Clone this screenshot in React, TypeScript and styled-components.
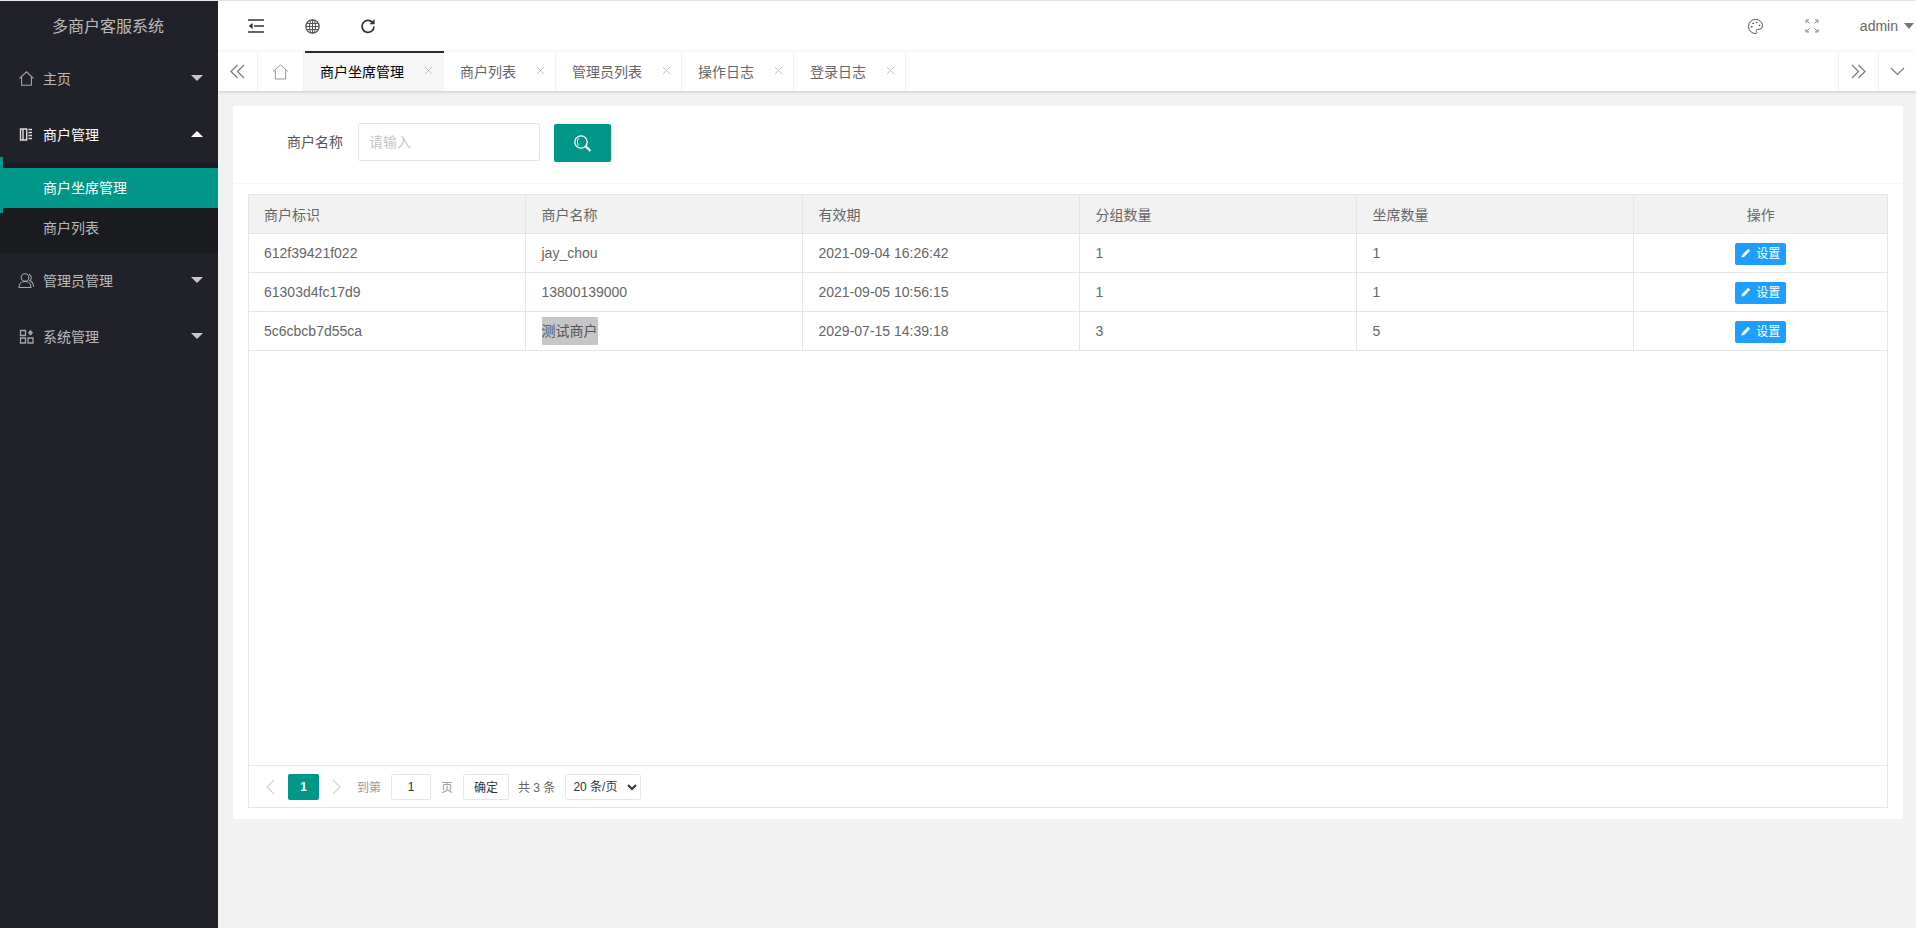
import React from "react"
import styled, { createGlobalStyle } from "styled-components"
import { Palette } from "lucide-react"

const GlobalStyle = createGlobalStyle`
  html,
  body {
    margin: 0;
    height: 100%;
    overflow: hidden;
    font-family: "Liberation Sans", "Noto Sans CJK SC", sans-serif;
    font-size: 14px;
    color: #666;
  }
  #root {
    height: 100%;
  }
  * {
    box-sizing: border-box;
  }
`

const Shell = styled.div`
  display: flex;
  height: 100%;
  border-top: 1px solid #e6e6e6;
  background: #f2f2f2;
`

const Sidebar = styled.aside`
  position: relative;
  flex: 0 0 218px;
  background: #212229;
`

const Logo = styled.div`
  height: 50px;
  padding: 0 2px 2px 0;
  display: flex;
  align-items: center;
  justify-content: center;
  font-size: 16px;
  color: rgba(255, 255, 255, 0.7);
`

const NavItem = styled.div<{ $open?: boolean }>`
  height: 56px;
  padding: 0 15px 2px 18px;
  display: flex;
  align-items: center;
  gap: 8px;
  color: ${(p) => (p.$open ? "#fff" : "rgba(255, 255, 255, 0.7)")};

  span {
    flex: 1;
  }
`

const NavIcon = styled.svg`
  flex: 0 0 17px;
  width: 17px;
  height: 17px;
  fill: none;
  stroke: currentColor;
  stroke-width: 1.1;
  opacity: 0.85;
`

const Caret = styled.i<{ $up?: boolean }>`
  width: 0;
  height: 0;
  border-left: 6px solid transparent;
  border-right: 6px solid transparent;
  border-top: ${(p) => (p.$up ? "0" : "6px solid rgba(255, 255, 255, 0.75)")};
  border-bottom: ${(p) => (p.$up ? "6px solid #fff" : "0")};
`

const SubNav = styled.div`
  padding: 5px 0;
  background: #191b1f;
`

const SubItem = styled.div<{ $active?: boolean }>`
  height: 40px;
  padding: 0 0 2px 43px;
  display: flex;
  align-items: center;
  color: ${(p) => (p.$active ? "#fff" : "rgba(255, 255, 255, 0.7)")};
  background: ${(p) => (p.$active ? "#009688" : "transparent")};
`

const NavBar = styled.i`
  position: absolute;
  left: 0;
  top: 156px;
  width: 3px;
  height: 56px;
  background: #009688;
`

const Main = styled.main`
  flex: 1;
  min-width: 0;
  display: flex;
  flex-direction: column;
`

const Header = styled.header`
  height: 50px;
  display: flex;
  align-items: center;
  background: #fff;
`

const ToolButton = styled.div`
  width: 56px;
  height: 50px;
  display: flex;
  align-items: center;
  justify-content: center;
  color: #333;
`

const HeaderLeft = styled.div`
  display: flex;
  margin-left: 10px;
`

const HeaderRight = styled.div`
  display: flex;
  align-items: center;
  margin-left: auto;
`

const UserMenu = styled.div`
  display: flex;
  align-items: center;
  gap: 6px;
  margin: 0 2px 0 20px;
  color: #666;
`

const UserCaret = styled.i`
  width: 0;
  height: 0;
  border-left: 5px solid transparent;
  border-right: 5px solid transparent;
  border-top: 6px solid #777;
`

const TabBar = styled.nav`
  height: 40px;
  display: flex;
  background: #fff;
  border-top: 1px solid #f6f6f6;
  box-shadow: 0 1px 3px rgba(0, 0, 0, 0.18);
  z-index: 1;
`

const TabControl = styled.div<{ $width: number; $right?: boolean }>`
  flex: 0 0 ${(p) => p.$width}px;
  display: flex;
  align-items: center;
  justify-content: center;
  color: #777;
  border-right: ${(p) => (p.$right ? "0" : "1px solid #f2f2f2")};
  border-left: ${(p) => (p.$right ? "1px solid #f2f2f2" : "0")};
`

const Tab = styled.div<{ $active?: boolean }>`
  position: relative;
  display: flex;
  align-items: center;
  padding: 0 ${(p) => (p.$active ? 11 : 10)}px 2px 16px;
  gap: 20px;
  color: ${(p) => (p.$active ? "#000" : "#666")};
  background: ${(p) => (p.$active ? "#f6f6f6" : "#fff")};
  border-right: ${(p) => (p.$active ? "0" : "1px solid #f2f2f2")};

  &::before {
    content: "";
    display: ${(p) => (p.$active ? "block" : "none")};
    position: absolute;
    left: 1px;
    right: 0;
    top: -1px;
    height: 2px;
    background: #292b34;
  }
`

const TabSpacer = styled.div`
  flex: 1;
`

const TabClose = styled.svg`
  width: 9px;
  height: 9px;
  stroke: #c2c2c2;
  stroke-width: 1;
`

const Content = styled.section`
  flex: 1;
  padding: 15px 13px 0 15px;
`

const Card = styled.div`
  height: 713px;
  background: #fff;
  border-radius: 2px;
  display: flex;
  flex-direction: column;
`

const SearchRow = styled.div`
  height: 78px;
  padding: 17px 0 0 54px;
  display: flex;
  align-items: flex-start;
  border-bottom: 1px solid #f6f6f6;
`

const SearchLabel = styled.label`
  height: 38px;
  margin-right: 15px;
  padding-bottom: 2px;
  display: flex;
  align-items: center;
  color: #555;
`

const SearchInput = styled.input`
  width: 182px;
  height: 38px;
  padding: 0 10px;
  border: 1px solid #e6e6e6;
  border-radius: 2px;
  font: inherit;
  outline: none;

  &::placeholder {
    color: #c4c4c4;
  }
`

const SearchButton = styled.button`
  width: 57px;
  height: 38px;
  margin: 1px 0 0 14px;
  padding: 0;
  border: 0;
  border-radius: 2px;
  background: #009688;
  color: #fff;
  display: flex;
  align-items: center;
  justify-content: center;
`

const TableBox = styled.div`
  flex: 1;
  margin: 10px 15px 11px;
  border: 1px solid #e6e6e6;
  display: flex;
  flex-direction: column;
`

const TableArea = styled.div`
  flex: 1;
`

const Table = styled.table`
  width: 100%;
  table-layout: fixed;
  border-collapse: collapse;

  th,
  td {
    height: 39px;
    padding: 0 15px;
    border-bottom: 1px solid #e6e6e6;
    border-right: 1px solid #e6e6e6;
    text-align: left;
    font-weight: 400;
    color: #666;
  }

  th + th,
  td + td {
    padding-left: 16px;
  }

  th {
    height: 38px;
    background: #f2f2f2;
  }

  th:last-child,
  td:last-child {
    text-align: center;
    border-right: 0;
  }
`

const Selected = styled.span`
  display: inline-block;
  line-height: 28px;
  background: #c6c6c6;
  color: #555;
`

const EditButton = styled.button`
  display: inline-flex;
  align-items: center;
  justify-content: center;
  gap: 5px;
  width: 51px;
  height: 22px;
  margin-top: 2px;
  padding: 0 0 2px;
  border: 0;
  border-radius: 2px;
  background: #1e9fff;
  color: #fff;
  font: inherit;
  font-size: 12px;
  vertical-align: middle;
`

const Pager = styled.div`
  height: 42px;
  padding-left: 15px;
  display: flex;
  align-items: center;
  border-top: 1px solid #e6e6e6;
  font-size: 12px;
`

const PagerArrow = styled.svg`
  width: 12px;
  height: 16px;
  fill: none;
  stroke: #d2d2d2;
  stroke-width: 1.2;
`

const PageCurrent = styled.div`
  width: 31px;
  height: 26px;
  margin: 0 12px;
  display: flex;
  align-items: center;
  justify-content: center;
  background: #009688;
  border-radius: 2px;
  color: #fff;
  font-weight: 700;
`

const PagerText = styled.span<{ $gap: number; $color?: string }>`
  margin-left: ${(p) => p.$gap}px;
  color: ${(p) => p.$color ?? "#999"};
`

const PagerInput = styled.input`
  width: 40px;
  height: 26px;
  margin-left: 10px;
  padding: 0;
  border: 1px solid #e6e6e6;
  border-radius: 2px;
  text-align: center;
  font: inherit;
  color: #333;
  outline: none;
`

const PagerButton = styled.button`
  width: 46px;
  height: 26px;
  margin-left: 10px;
  padding: 0;
  border: 1px solid #e6e6e6;
  border-radius: 2px;
  background: #fff;
  font: inherit;
  color: #333;
`

const PagerSelect = styled.select`
  width: 76px;
  height: 26px;
  margin-left: 10px;
  padding: 0 0 0 3px;
  border: 1px solid #e6e6e6;
  border-radius: 2px;
  background: #fff;
  font: inherit;
  font-size: 12px;
  color: #333;
`

const rows = [
  { id: "612f39421f022", name: "jay_chou", expire: "2021-09-04 16:26:42", groups: 1, seats: 1 },
  { id: "61303d4fc17d9", name: "13800139000", expire: "2021-09-05 10:56:15", groups: 1, seats: 1 },
  { id: "5c6cbcb7d55ca", name: "测试商户", expire: "2029-07-15 14:39:18", groups: 3, seats: 5, selected: true },
]

const tabs = [
  { label: "商户坐席管理", active: true },
  { label: "商户列表" },
  { label: "管理员列表" },
  { label: "操作日志" },
  { label: "登录日志" },
]

const HomeIcon = () => (
  <NavIcon viewBox="0 0 17 17">
    <path d="M1.5 8.3 8.5 1.8l7 6.5M3.6 7v8.2h9.8V7" />
  </NavIcon>
)

const BookIcon = () => (
  <NavIcon viewBox="0 0 17 17">
    <path d="M2.5 3h6.2v11H2.5zM5 3v11" strokeWidth="1.4" />
    <path d="M10.5 3.5h3.5M10.5 6.5h3.5M10.5 9.5h3.5M10.5 12.5h3.5" strokeWidth="1.5" />
  </NavIcon>
)

const UserIcon = () => (
  <NavIcon viewBox="0 0 17 17">
    <circle cx="7" cy="5.5" r="3.8" />
    <path d="M1 15.5c0-3.5 2.5-6 6-6s6 2.5 6 6zM11 2.2c2.6.9 3.2 4.6.8 6.3 2 .9 3.6 3 3.8 6.2" />
  </NavIcon>
)

const AppsIcon = () => (
  <NavIcon viewBox="0 0 17 17">
    <path d="M2.5 2.5h5v5h-5zM2.5 10h5v5h-5zM10 10h5v5h-5z" strokeWidth="1.3" />
    <path d="m12.5 1.8 2.6 3-2.6 3-2.6-3z" fill="currentColor" stroke="none" />
  </NavIcon>
)

const ShrinkIcon = () => (
  <svg width="16" height="14" viewBox="0 0 16 14">
    <path d="M0 1h16M0 13h16M6 7h10" stroke="#333" strokeWidth="1.4" />
    <path d="M4.6 4v6L0.6 7z" fill="#333" />
  </svg>
)

const GlobeIcon = () => (
  <svg width="15" height="15" viewBox="0 0 15 15" fill="none" stroke="#555" strokeWidth="1">
    <circle cx="7.5" cy="7.5" r="6.6" strokeWidth="1.3" />
    <ellipse cx="7.5" cy="7.5" rx="3" ry="6.6" />
    <path d="M7.5 1v13M1 7.5h13M2 4.5h11M2 10.5h11" />
  </svg>
)

const RefreshIcon = () => (
  <svg width="16" height="16" viewBox="0 0 16 16" fill="none">
    <path d="M12.3 4.2A6 6 0 1 0 14 8.4" stroke="#333" strokeWidth="1.7" />
    <path d="M14.6 1v5.2H9.4z" fill="#333" />
  </svg>
)

const FullIcon = () => (
  <svg width="14" height="14" viewBox="0 0 14 14" fill="none" stroke="#888" strokeWidth="1">
    <path d="M1 4V1h3M1 1l3.5 3.5M13 4V1h-3M13 1 9.5 4.5M1 10v3h3M1 13l3.5-3.5M13 10v3h-3M13 13l-3.5-3.5" />
  </svg>
)

const DoubleLeft = () => (
  <svg width="15" height="15" viewBox="0 0 15 15" fill="none" stroke="currentColor" strokeWidth="1.2">
    <path d="M7.5 1 1 7.5 7.5 14M14 1 7.5 7.5 14 14" />
  </svg>
)

const DoubleRight = () => (
  <svg width="15" height="15" viewBox="0 0 15 15" fill="none" stroke="currentColor" strokeWidth="1.2">
    <path d="M1 1l6.5 6.5L1 14M7.5 1 14 7.5 7.5 14" />
  </svg>
)

const ChevronDown = () => (
  <svg width="15" height="9" viewBox="0 0 15 9" fill="none" stroke="currentColor" strokeWidth="1.1">
    <path d="M1 1l6.5 6.5L14 1" />
  </svg>
)

const TabHome = () => (
  <svg width="17" height="16" viewBox="0 0 17 16" fill="none" stroke="#999" strokeWidth="1">
    <path d="M1 7.6 8.5 1 16 7.6M3.4 6v9h10.2V6" />
  </svg>
)

const SearchIcon = () => (
  <svg width="18" height="17" viewBox="0 0 18 17" fill="none" stroke="#fff">
    <circle cx="7" cy="7" r="6.2" strokeWidth="1.3" />
    <path d="M4.6 3.2C3 5 3 9 4.6 10.8" strokeWidth="1" />
    <path d="m11.8 11.5 4.6 4.4" strokeWidth="2.2" />
  </svg>
)

const PencilIcon = () => (
  <svg width="10" height="10" viewBox="0 0 10 10" fill="#fff">
    <path d="M7.2.8 9.2 2.8 3 9 .5 9.5 1 7z" />
  </svg>
)

const App = () => {
  return (
    <>
      <GlobalStyle />
      <Shell>
        <Sidebar>
          <Logo>多商户客服系统</Logo>
          <NavItem>
            <HomeIcon />
            <span>主页</span>
            <Caret />
          </NavItem>
          <NavItem $open>
            <BookIcon />
            <span>商户管理</span>
            <Caret $up />
          </NavItem>
          <SubNav>
            <SubItem $active>商户坐席管理</SubItem>
            <SubItem>商户列表</SubItem>
          </SubNav>
          <NavItem>
            <UserIcon />
            <span>管理员管理</span>
            <Caret />
          </NavItem>
          <NavItem>
            <AppsIcon />
            <span>系统管理</span>
            <Caret />
          </NavItem>
          <NavBar />
        </Sidebar>

        <Main>
          <Header>
            <HeaderLeft>
              <ToolButton>
                <ShrinkIcon />
              </ToolButton>
              <ToolButton>
                <GlobeIcon />
              </ToolButton>
              <ToolButton>
                <RefreshIcon />
              </ToolButton>
            </HeaderLeft>
            <HeaderRight>
              <ToolButton>
                <Palette size={17} strokeWidth={1.4} color="#555" />
              </ToolButton>
              <ToolButton>
                <FullIcon />
              </ToolButton>
              <UserMenu>
                admin
                <UserCaret />
              </UserMenu>
            </HeaderRight>
          </Header>

          <TabBar>
            <TabControl $width={40}>
              <DoubleLeft />
            </TabControl>
            <TabControl $width={46}>
              <TabHome />
            </TabControl>
            {tabs.map((tab) => (
              <Tab key={tab.label} $active={tab.active}>
                {tab.label}
                <TabClose viewBox="0 0 9 9">
                  <path d="M1 1l7 7M8 1 1 8" />
                </TabClose>
              </Tab>
            ))}
            <TabSpacer />
            <TabControl $width={40} $right>
              <DoubleRight />
            </TabControl>
            <TabControl $width={38} $right>
              <ChevronDown />
            </TabControl>
          </TabBar>

          <Content>
            <Card>
              <SearchRow>
                <SearchLabel>商户名称</SearchLabel>
                <SearchInput placeholder="请输入" />
                <SearchButton>
                  <SearchIcon />
                </SearchButton>
              </SearchRow>
              <TableBox>
                <TableArea>
                  <Table>
                    <colgroup>
                      <col width="276" />
                      <col width="277" />
                      <col width="277" />
                      <col width="277" />
                      <col width="277" />
                      <col />
                    </colgroup>
                    <thead>
                      <tr>
                        <th>商户标识</th>
                        <th>商户名称</th>
                        <th>有效期</th>
                        <th>分组数量</th>
                        <th>坐席数量</th>
                        <th>操作</th>
                      </tr>
                    </thead>
                    <tbody>
                      {rows.map((row) => (
                        <tr key={row.id}>
                          <td>{row.id}</td>
                          <td>{row.selected ? <Selected>{row.name}</Selected> : row.name}</td>
                          <td>{row.expire}</td>
                          <td>{row.groups}</td>
                          <td>{row.seats}</td>
                          <td>
                            <EditButton>
                              <PencilIcon />
                              设置
                            </EditButton>
                          </td>
                        </tr>
                      ))}
                    </tbody>
                  </Table>
                </TableArea>
                <Pager>
                  <PagerArrow viewBox="0 0 12 16">
                    <path d="M10 1 3 8l7 7" />
                  </PagerArrow>
                  <PageCurrent>1</PageCurrent>
                  <PagerArrow viewBox="0 0 12 16">
                    <path d="m2 1 7 7-7 7" />
                  </PagerArrow>
                  <PagerText $gap={14}>到第</PagerText>
                  <PagerInput defaultValue="1" />
                  <PagerText $gap={10}>页</PagerText>
                  <PagerButton>确定</PagerButton>
                  <PagerText $gap={9} $color="#666">
                    共 3 条
                  </PagerText>
                  <PagerSelect defaultValue="20">
                    <option value="20">20 条/页</option>
                    <option value="50">50 条/页</option>
                  </PagerSelect>
                </Pager>
              </TableBox>
            </Card>
          </Content>
        </Main>
      </Shell>
    </>
  )
}

export default App
